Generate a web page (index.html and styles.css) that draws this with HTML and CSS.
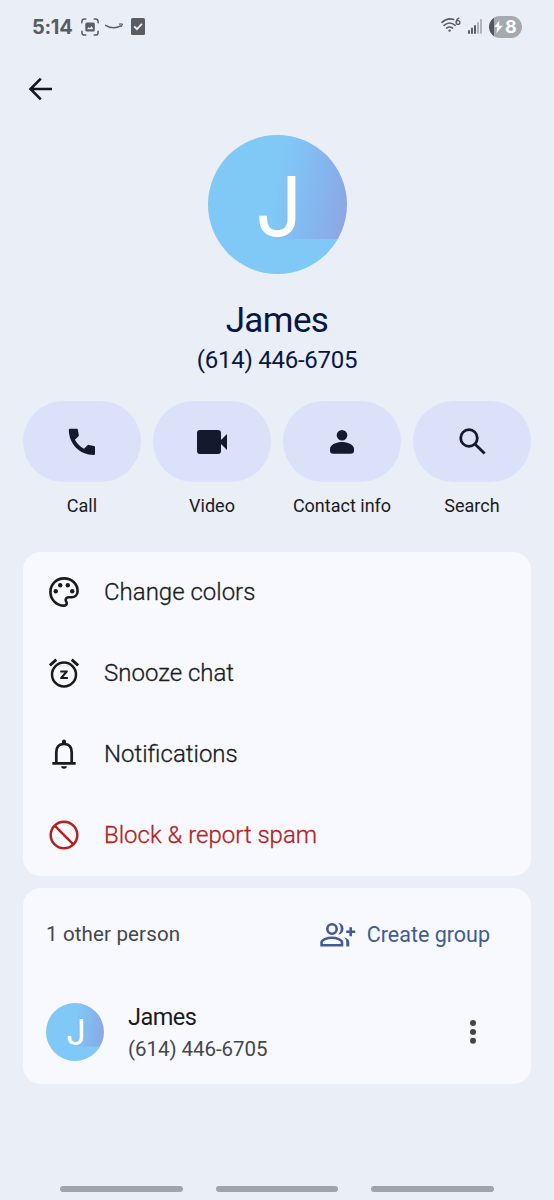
FILE: index.html
```html
<!DOCTYPE html>
<html lang="en">
<head>
<meta charset="utf-8">
<title>Conversation details</title>
<link rel="stylesheet" href="styles.css">
</head>
<body>
<div class="screen">
  <div class="status">
    <span class="clock">5:14</span>
    <svg class="s-shot" width="18" height="18" viewBox="0 0 18 18" fill="none" stroke="currentColor" stroke-width="1.500" stroke-linecap="round"><path d="M.9 4.800V3.600Q.9.900 3.600.9H4.800M13.200 .9h1.200q2.700 0 2.700 2.700v1.200M17.100 13.200v1.200q0 2.700-2.700 2.700h-1.200M4.800 17.100H3.600q-2.700 0-2.700-2.700v-1.200"/><rect x="4.300" y="4.600" width="9.500" height="9" rx="1.500" fill="currentColor" stroke="none"/><path d="M6 11.200l1.700-2.300 1.300 1.300 1.600-2.100 1.700 3.100z" fill="#ebeef6" stroke="none"/></svg>
    <svg class="s-smile" width="18" height="8" viewBox="0 0 18 8" fill="none" stroke="currentColor"><path d="M.5 2.300Q8.500 7 15.800 2.900" stroke-width="1.500" stroke-linecap="round"/><path d="M14 1.300q3.800-.9 3.300.3t-1.300 2.400" stroke-width="1.100"/></svg>
    <svg class="s-check" width="14" height="17" viewBox="0 0 14 17"><rect width="14" height="17" rx="1.500" fill="currentColor"/><path d="M3.200 8.300l2.700 2.800 5-5.200" fill="none" stroke="#ebeef6" stroke-width="1.900"/></svg>
    <svg class="s-wifi" width="20" height="16" viewBox="0 0 20 16" fill="none" stroke="currentColor" stroke-width="1.600" stroke-linecap="round"><path d="M1 5.300Q6.500.4 12.700 2.400M3 8.300q5.600-4.600 11.200 0M5.600 11.100q3-2.300 6 0"/><circle cx="8.600" cy="13.600" r="1.200" fill="currentColor" stroke="none"/><circle cx="17" cy="5.500" r="1.900" stroke-width="1.300"/><path d="M15.200 4.900q.4-2.700 2.600-3.700" stroke-width="1.300"/></svg>
    <svg class="s-signal" width="14" height="15" viewBox="0 0 14 15" fill="currentColor"><rect y="11" width="2" height="4" rx="1"/><rect x="3" y="8.500" width="2" height="6.500" rx="1"/><rect x="6" y="6" width="2" height="9" rx="1"/><rect x="9" y="3" width="2" height="12" rx="1" opacity=".4"/><rect x="12" width="2" height="15" rx="1" opacity=".4"/></svg>
    <span class="battery"><svg width="9" height="14" viewBox="0 0 9 14" fill="#fff"><path d="M5.300.5L.3 7h3L2.400 13.300 8.700 5.700H5.100z"/></svg><span>8</span></span>
  </div>

  <div class="topbar">
    <svg width="24" height="24" viewBox="0 0 24 24" fill="none" stroke="#15161c" stroke-width="2.600"><path d="M12.800 1.700L2.500 12l10.300 10.300M2.500 12H24"/></svg>
  </div>

  <div class="profile">
    <div class="avatar"><span class="letter">J</span></div>
    <h1 class="name">James</h1>
    <div class="phone">(614) 446-6705</div>
  </div>

  <div class="actions">
    <div class="action"><div class="pill"><svg width="28" height="28" viewBox="0 0 28 28" fill="#141a2e"><path d="M2 .8h6.700q1 0 1.200 1l.9 5.200q.1.800-.5 1.400L6.900 11.700q3.400 5.900 9.100 9.100l3.500-3.500q.6-.6 1.400-.4l5.100 1q1 .2 1 1.200V25.800q0 1.300-1.300 1.300C11.600 26.900 1.100 16.200.8 2.100Q.8.800 2 .8z"/></svg></div><span class="label">Call</span></div>
    <div class="action"><div class="pill"><svg width="30" height="24" viewBox="0 0 30 24" fill="#141a2e"><rect width="24" height="24" rx="3"/><path d="M22 12l8-8v16z"/></svg></div><span class="label">Video</span></div>
    <div class="action"><div class="pill"><svg width="24" height="24" viewBox="0 0 24 24" fill="#141a2e"><circle cx="12" cy="5.300" r="5.300"/><path d="M12 12c5 0 12 2.400 12 6.800v1.700q0 3.300-3.300 3.300H3.300Q0 23.800 0 20.500v-1.700C0 14.400 7 12 12 12z"/></svg></div><span class="label">Contact info</span></div>
    <div class="action"><div class="pill"><svg width="27" height="27" viewBox="0 0 27 27" fill="none" stroke="#141a2e" stroke-width="2.800"><circle cx="10" cy="10" r="8.300"/><path d="M15.900 15.900l9.700 9.700"/></svg></div><span class="label">Search</span></div>
  </div>

  <div class="card menu">
    <div class="row"><svg width="30" height="30" viewBox="0 0 30 30"><path d="M15 1.400C7.300 1.400 1.400 7.600 1.400 15S7.400 28.600 15 28.600c1.900 0 2.900-1.200 2.700-2.800-.1-1-1.200-1.700-1-3.200.2-1.500 1.400-2.400 3.200-2.400h2.600c3.500 0 6.100-2.500 6.100-6C28.600 6.900 22.600 1.400 15 1.400z" fill="none" stroke="currentColor" stroke-width="2.600"/><g fill="currentColor"><circle cx="6.800" cy="14.300" r="2.200"/><circle cx="11.200" cy="8.300" r="2.200"/><circle cx="18.800" cy="8.300" r="2.200"/><circle cx="23.200" cy="14.300" r="2.200"/></g></svg><span>Change colors</span></div>
    <div class="row"><svg width="30" height="30" viewBox="0 0 30 30" fill="none" stroke="currentColor" stroke-width="2.500"><circle cx="15" cy="16.500" r="12"/><path d="M.9 7.400l6.400-5.700M29.100 7.400l-6.400-5.700" stroke-width="2.900"/><path d="M11.300 12.400h7.400v1.600l-4.300 4.900h4.500v2.200h-7.700v-1.600l4.300-4.900h-4.200z" fill="currentColor" stroke="none"/></svg><span>Snooze chat</span></div>
    <div class="row"><svg width="30" height="30" viewBox="0 0 30 30" fill="none" stroke="currentColor" stroke-width="2.700"><path d="M3.300 24.400h23.400M7.300 24.400V13.200q0-8.200 7.700-8.200t7.700 8.200v11.200"/><path d="M15 .6q2.100 0 2.100 2.100v3h-4.200v-3Q12.900.6 15 .6zM12 27.200h6q-.4 2.500-3 2.500t-3-2.500z" fill="currentColor" stroke="none"/></svg><span>Notifications</span></div>
    <div class="row danger"><svg width="30" height="30" viewBox="0 0 30 30" fill="none" stroke="currentColor" stroke-width="2.500"><circle cx="15" cy="15" r="13.300"/><path d="M5.700 5.700l18.600 18.600"/></svg><span>Block &amp; report spam</span></div>
  </div>

  <div class="card people">
    <div class="people-head">
      <span class="count">1 other person</span>
      <div class="create"><svg width="36" height="24" viewBox="0 0 36 24" fill="none" stroke="currentColor" stroke-width="2.600"><circle cx="12" cy="6" r="4.700"/><path d="M1.600 22.200v-2.900c0-2.500 5.500-4.500 10.200-4.500s10.200 2 10.200 4.500v2.900zM30.700 4.200v9M26.200 8.700h9"/><path d="M18.300.1c7 .3 7 11.300 0 11.400 3.300-3.200 3.300-8.200 0-11.400zM24.300 14.200q5 1.500 5 5v4.300h-3v-4.300q0-2.800-2-5z" fill="currentColor" stroke="none"/></svg><span class="create-label">Create group</span></div>
    </div>
    <div class="person">
      <div class="avatar small"><span class="letter">J</span></div>
      <div class="info"><span class="person-name">James</span><span class="person-phone">(614) 446-6705</span></div>
      <svg class="more" width="6" height="24" viewBox="0 0 6 24" fill="#44464e"><circle cx="3" cy="3" r="3"/><circle cx="3" cy="11.900" r="3"/><circle cx="3" cy="20.700" r="3"/></svg>
    </div>
  </div>

  <div class="nav"><i></i><i></i><i></i></div>
</div>
</body>
</html>
```
FILE: styles.css
```css
* { box-sizing: border-box; }
body { margin: 0; background: #eaeef6; font-family: Roboto, "Noto Sans", sans-serif; color: #191b22; }
.screen { width: 554px; height: 1200px; padding: 0 23px; display: flex; flex-direction: column; overflow: hidden; white-space: nowrap; }
svg { display: block; flex: none; }
.status { height: 53px; margin: 0 -23px; padding: 0 32px; display: flex; align-items: center; color: #5a5c61; }
.clock { font: 700 20px Inter, sans-serif; width: 49px; letter-spacing: -.3px; }
.s-smile { margin-left: 6px; }
.s-check { margin-left: 8px; }
.s-wifi { margin-left: auto; margin-top: -3px; }
.s-signal { margin-left: 7px; }
.battery { width: 33px; height: 22px; margin-left: 7px; border-radius: 11px; background: linear-gradient(90deg, #54565b 5px, #a6a9b0 5px); color: #fff; display: flex; align-items: center; padding-left: 5px; gap: 2px; font: 700 18px Inter, sans-serif; }
.topbar { height: 82px; padding: 24px 0 0 5px; }
.profile { height: 266px; display: flex; flex-direction: column; align-items: center; color: #071645; }
.avatar { width: 139px; height: 139px; flex: none; border-radius: 50%; background: linear-gradient(100deg, #80c8f6 50%, #83b9f0 72%, #8da5e2 100%) 0 0 / 100% 75% no-repeat #80c8f6; color: #fff; display: flex; justify-content: center; }
.letter { font: 400 83px/142px Inter, sans-serif; padding-left: 4px; }
.name { margin: 25px 0 0; font-weight: 400; font-size: 35px; line-height: 44px; letter-spacing: -.6px; }
.phone { margin-top: 1px; font-size: 24px; line-height: 32px; letter-spacing: -.25px; }
.actions { height: 151px; display: grid; grid-template-columns: repeat(4, 1fr); gap: 12px; }
.action { display: flex; flex-direction: column; align-items: center; }
.pill { width: 100%; height: 81px; border-radius: 40.5px; background: #dce1fa; display: flex; align-items: center; justify-content: center; }
.label { margin-top: 12px; font-size: 18px; line-height: 24px; }
.card { border-radius: 18px; background: #f8f9fe; }
.menu { height: 324px; }
.row { height: 81px; padding: 0 0 2px 25.500px; display: flex; align-items: center; gap: 25.500px; font-size: 24px; font-weight: 300; -webkit-text-stroke: .3px currentColor; }
.danger { color: #b3211d; }
.people { margin-top: 12px; height: 196px; padding: 0 23px; }
.people-head { height: 93px; display: flex; align-items: center; justify-content: space-between; color: #44464e; }
.count { font-size: 20.500px; letter-spacing: .15px; padding-bottom: 2px; }
.create { display: flex; align-items: center; gap: 11px; color: #435a94; margin-right: 18px; }
.create-label { font-size: 21.500px; }
.person { height: 103px; display: flex; align-items: center; padding-bottom: 1px; }
.small { width: 58px; height: 58px; }
.small .letter { font-size: 35px; line-height: 59px; padding-left: 2px; }
.info { margin-left: 24px; padding-top: 1px; display: flex; flex-direction: column; }
.person-name { font-size: 23.500px; line-height: 32px; letter-spacing: -.5px; }
.person-phone { font-size: 20.500px; line-height: 32px; color: #44464e; letter-spacing: -.05px; }
.more { margin-left: auto; margin-right: 32px; }
.nav { margin-top: auto; height: 14px; display: flex; justify-content: center; gap: 33px; }
.nav i { width: 122.500px; height: 6px; border-radius: 3px; background: #a0a3ac; }
```
